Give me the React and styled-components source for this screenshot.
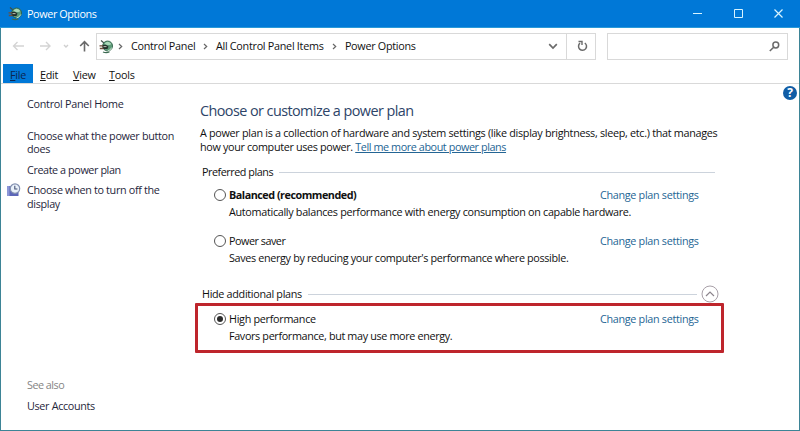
import React, {useState} from 'react'
import styled, {createGlobalStyle} from 'styled-components'

const colors = {
    accent: '#0078d7',
    frame: '#3d8496',
    text: '#101010',
    nav: '#1f263b',
    heading: '#2d4468',
    link: '#246594',
    line: '#d9d9d9',
    icon: '#6b6b6b',
    highlight: '#be252c',
}

const GlobalStyle = createGlobalStyle`
* {
    box-sizing: border-box;
}
body {
    margin: 0;
    background: #fff;
    font-family: "Open Sans", "Noto Sans", sans-serif;
    font-size: 10.8px;
    line-height: 14px;
    letter-spacing: -0.33px;
    color: ${colors.text};
    overflow: hidden;
}
`

const Window = styled.div`
display: flex;
flex-direction: column;
width: 800px;
height: 431px;
background: #fff;
border: solid ${colors.frame};
border-width: 0 1px 1px 1px;
`
const TitleBar = styled.header`
display: flex;
align-items: center;
flex: 0 0 28px;
margin: 0 -1px;
padding: 0 1px 0 8px;
background: ${colors.accent};
border-bottom: 1px solid #2a9ad8;
`
const Title = styled.span`
flex: 1;
margin-left: 5px;
color: #fff;
letter-spacing: -0.38px;
`
const WindowButton = styled.button`
display: flex;
align-items: center;
justify-content: center;
width: 40.5px;
height: 27px;
padding: 0;
border: none;
background: transparent;
color: #d8f4ff;
`
const NavBar = styled.div`
display: flex;
align-items: center;
flex: 0 0 36px;
padding: 0 11px 0 10px;
`
const NavIcons = styled.div`
display: flex;
align-items: center;
width: 85px;
svg {
    display: block;
}
`
const AddressBar = styled.div`
display: flex;
align-items: center;
width: 501px;
height: 27px;
border: 1px solid ${colors.line};
`
const Crumb = styled.span`
flex: 0 0 ${({$width}) => $width}px;
letter-spacing: -0.28px;
white-space: nowrap;
`
const AddressIcon = styled.span`
display: flex;
justify-content: center;
width: 19px;
`
const Separator = styled.span`
display: flex;
justify-content: center;
flex: 0 0 10px;
margin-right: 5px;
`
const AddressButton = styled.button`
display: flex;
align-items: center;
justify-content: center;
width: ${({$width}) => $width}px;
height: 25px;
padding: 0 0 0 ${({$shift}) => $shift || 0}px;
border: none;
border-left: 1px solid ${({$line}) => $line ? colors.line : 'transparent'};
background: transparent;
`
const SearchBox = styled.div`
display: flex;
align-items: center;
justify-content: flex-end;
width: 181px;
height: 27px;
margin-left: 11px;
padding-right: 7px;
border: 1px solid ${colors.line};
`
const MenuBar = styled.nav`
display: flex;
flex: 0 0 20px;
padding-left: 2px;
border-bottom: 1px solid ${colors.line};
`
const MenuItem = styled.span`
width: ${({$width}) => $width}px;
padding: 4px 0 0 7px;
background: ${({$active}) => $active ? colors.accent : 'transparent'};
color: ${({$active}) => $active ? '#0b2550' : colors.text};
letter-spacing: -0.25px;
`
const Body = styled.div`
display: flex;
flex: 1;
`
const Sidebar = styled.aside`
display: flex;
flex-direction: column;
width: 190px;
padding: 13px 0 18px 26px;
`
const SideLink = styled.a`
position: relative;
margin-bottom: ${({$gap}) => $gap || 0}px;
color: ${({$muted}) => $muted ? '#858585' : colors.nav};
line-height: 13.5px;
letter-spacing: ${({$track}) => $track || -0.33}px;
white-space: nowrap;
`
const Spacer = styled.div`
flex: 1;
`
const TimerBadge = styled.span`
position: absolute;
left: -21px;
top: 0;
`
const Main = styled.main`
flex: 1;
padding: 17px 0 0 9px;
`
const Heading = styled.h1`
margin: 0 0 5px;
font-size: 14.4px;
font-weight: 400;
line-height: 20px;
color: ${colors.heading};
letter-spacing: -0.56px;
`
const Intro = styled.div`
margin-bottom: 10px;
`
const Line = styled.div`
line-height: 13.5px;
letter-spacing: ${({$track}) => $track || -0.3}px;
white-space: nowrap;
`
const HelpLink = styled.a`
color: ${colors.link};
text-decoration: underline;
text-underline-offset: 1px;
letter-spacing: -0.41px;
`
const GroupTitle = styled.div`
display: flex;
align-items: center;
width: 519px;
height: 18px;
padding-left: 2px;
letter-spacing: ${({$track}) => $track || -0.31}px;
white-space: nowrap;
`
const Rule = styled.span`
flex: 1;
height: 1px;
margin: 0 ${({$end}) => $end}px 0 6px;
background: #ccd3dc;
`
const PlanRow = styled.div`
width: 520px;
height: ${({$height}) => $height}px;
padding: ${({$top}) => $top}px 21px 0 14px;
`
const PlanHead = styled.label`
display: flex;
align-items: center;
height: 15px;
`
const Radio = styled.span`
display: flex;
align-items: center;
justify-content: center;
width: 12px;
height: 12px;
margin-right: 3px;
border: 1px solid #555;
border-radius: 50%;
&::after {
    content: '';
    width: 6px;
    height: 6px;
    border-radius: 50%;
    background: ${({$checked}) => $checked ? '#2b2b2b' : 'transparent'};
}
`
const PlanName = styled.span`
flex: 1;
font-weight: ${({$bold}) => $bold ? 700 : 400};
letter-spacing: ${({$track}) => $track || 0}px;
`
const PlanLink = styled.a`
width: 99px;
color: ${colors.link};
letter-spacing: -0.31px;
white-space: nowrap;
`
const PlanNote = styled.div`
margin: 3px 0 0 15px;
letter-spacing: ${({$track}) => $track || 0}px;
white-space: nowrap;
`
const Highlight = styled.div`
width: 529px;
height: 50px;
margin-left: -5px;
padding-left: 2px;
border: 3px solid ${colors.highlight};
border-radius: 1px;
`
const Help = styled.span`
display: flex;
align-items: center;
justify-content: center;
flex: 0 0 14px;
height: 14px;
margin: 2px 2px 0 0;
border-radius: 50%;
background: #105ca5;
color: #fff;
font-size: 12px;
font-weight: 700;
letter-spacing: 0;
`

const PlugIcon = () => (
    <svg width="14" height="15" viewBox="0 0 14 15" fill="none">
        <path d="M2 1.5 L5 4" stroke="#3d4f47" strokeWidth="1.1"/>
        <circle cx="8.6" cy="7" r="5" fill="#5d9a78" stroke="#2c5c44" strokeWidth="0.8"/>
        <path d="M5.5 4.5 Q8.5 1 12 4.5 Q12 6.5 9.5 6 Q7 6.5 5.5 4.5Z" fill="#a9d8b8"/>
        <path d="M8.5 12 Q11.5 11.5 12.8 8.5" stroke="#c4e6cc" strokeWidth="1"/>
        <path d="M4 13 Q7.5 14.5 10.5 12.8" stroke="#3c6a52" strokeWidth="1.2"/>
        <path d="M3.5 6 L7 5.8 L9.5 7.5 L8.5 10 L4 10Z" fill="#23312b"/>
        <path d="M0.5 6.8 H4 M0.8 9.5 H4.5" stroke="#6e4f3d" strokeWidth="1.3"/>
        <path d="M4.5 7.6 H7.5" stroke="#c9cdbd" strokeWidth="0.9"/>
    </svg>
)

const TimerIcon = () => (
    <svg width="15" height="15" viewBox="0 0 15 15" fill="none">
        <path d="M1 3 H7 V9 H12.5 V13 H1Z" fill="#5c66b8"/>
        <path d="M1 3 H3.5 V13 H1Z" fill="#8d97d8"/>
        <circle cx="9" cy="5.6" r="4.7" fill="#e9f1fa" stroke="#8390b0" strokeWidth="1.2"/>
        <path d="M8.8 2.8 V6 H11.4" stroke="#465274" strokeWidth="1.1"/>
    </svg>
)

const Arrow = ({d, width, color, stroke = 1.4}) => (
    <svg width={width} height="14" viewBox={`0 0 ${width} 14`} fill="none">
        <path d={d} stroke={color} strokeWidth={stroke}/>
    </svg>
)

const Chevron = () => (
    <svg width="5" height="7" viewBox="0 0 5 7" fill="none">
        <path d="M1 1 L3.7 3.5 L1 6" stroke="#666" strokeWidth="1.2"/>
    </svg>
)

const preferred = [
    {id: 'balanced', name: 'Balanced (recommended)', bold: true, height: 46, top: 6,
        nameTrack: -0.48, noteTrack: -0.31,
        note: 'Automatically balances performance with energy consumption on capable hardware.'},
    {id: 'saver', name: 'Power saver', height: 58, top: 6,
        nameTrack: -0.48, noteTrack: -0.34,
        note: "Saves energy by reducing your computer's performance where possible."},
]
const extra = {id: 'high', name: 'High performance', height: 44, top: 5,
    nameTrack: -0.29, noteTrack: -0.35,
    note: 'Favors performance, but may use more energy.'}

const Plan = ({plan, checked, onSelect}) => (
    <PlanRow $height={plan.height} $top={plan.top}>
        <PlanHead onClick={() => onSelect(plan.id)}>
            <Radio $checked={checked}/>
            <PlanName $bold={plan.bold} $track={plan.nameTrack}>{plan.name}</PlanName>
            <PlanLink>Change plan settings</PlanLink>
        </PlanHead>
        <PlanNote $track={plan.noteTrack}>{plan.note}</PlanNote>
    </PlanRow>
)

const App = () => {
    const [selected, setSelected] = useState('high')

    return (
        <Window>
            <GlobalStyle/>
            <TitleBar>
                <PlugIcon/>
                <Title>Power Options</Title>
                <WindowButton>
                    <svg width="9" height="9"><path d="M0 4.5 H9" stroke="currentColor"/></svg>
                </WindowButton>
                <WindowButton>
                    <svg width="9" height="9"><path d="M0.5 0.5 H8.5 V8.5 H0.5Z" stroke="currentColor" fill="none"/></svg>
                </WindowButton>
                <WindowButton>
                    <svg width="9" height="9"><path d="M0.5 0.5 L8.5 8.5 M8.5 0.5 L0.5 8.5" stroke="currentColor" strokeWidth="1.2"/></svg>
                </WindowButton>
            </TitleBar>
            <NavBar>
                <NavIcons>
                    <Arrow width={27} color="#d4d4d4" d="M13 7 H2.5 M6.5 3 L2.5 7 L6.5 11"/>
                    <Arrow width={24} color="#d4d4d4" d="M2 7 H12 M8 3 L12 7 L8 11"/>
                    <Arrow width={16} color="#cfcfcf" d="M2 6 L4 8 L6 6"/>
                    <Arrow width={14} color="#696969" stroke={1.6} d="M6.5 12.5 V3 M2.2 7 L6.5 2.7 L10.8 7"/>
                </NavIcons>
                <AddressBar>
                    <AddressIcon><PlugIcon/></AddressIcon>
                    <Separator><Chevron/></Separator>
                    <Crumb $width={70}>Control Panel</Crumb>
                    <Separator><Chevron/></Separator>
                    <Crumb $width={114}>All Control Panel Items</Crumb>
                    <Separator><Chevron/></Separator>
                    <Crumb $width={80}>Power Options</Crumb>
                    <Spacer/>
                    <AddressButton $width={29} $shift={2}>
                        <svg width="10" height="7" fill="none"><path d="M1.2 1.2 L5 5 L8.8 1.2" stroke={colors.icon} strokeWidth="1.7"/></svg>
                    </AddressButton>
                    <AddressButton $width={29} $shift={2} $line>
                        <svg width="11" height="12" viewBox="0 0 11 12" fill="none">
                            <path d="M3 3.2 A4 4 0 1 0 7.8 3" stroke={colors.icon} strokeWidth="1.5"/>
                            <path d="M1.5 1.5 H5 V5" stroke={colors.icon} strokeWidth="1.4"/>
                        </svg>
                    </AddressButton>
                </AddressBar>
                <SearchBox>
                    <svg width="11" height="11" viewBox="0 0 11 11" fill="none">
                        <circle cx="6.8" cy="4" r="2.9" stroke={colors.icon} strokeWidth="1.5"/>
                        <path d="M4.7 6.2 L0.8 10" stroke={colors.icon} strokeWidth="1.6"/>
                    </svg>
                </SearchBox>
            </NavBar>
            <MenuBar>
                <MenuItem $width={30} $active><u>F</u>ile</MenuItem>
                <MenuItem $width={33}><u>E</u>dit</MenuItem>
                <MenuItem $width={36}><u>V</u>iew</MenuItem>
                <MenuItem $width={40}><u>T</u>ools</MenuItem>
            </MenuBar>
            <Body>
                <Sidebar>
                    <SideLink $gap={18} $track={-0.27}>Control Panel Home</SideLink>
                    <SideLink $gap={7}>Choose what the power button<br/>does</SideLink>
                    <SideLink $gap={7} $track={-0.41}>Create a power plan</SideLink>
                    <SideLink>
                        <TimerBadge><TimerIcon/></TimerBadge>
                        Choose when to turn off the<br/>display
                    </SideLink>
                    <Spacer/>
                    <SideLink $muted $gap={7} $track={-0.5}>See also</SideLink>
                    <SideLink>User Accounts</SideLink>
                </Sidebar>
                <Main>
                    <Heading>Choose or customize a power plan</Heading>
                    <Intro>
                        <Line>A power plan is a collection of hardware and system settings (like display brightness, sleep, etc.) that manages</Line>
                        <Line $track={-0.34}>how your computer uses power. <HelpLink>Tell me more about power plans</HelpLink></Line>
                    </Intro>
                    <GroupTitle $track={-0.46}>Preferred plans<Rule $end={4}/></GroupTitle>
                    {preferred.map((plan) =>
                        <Plan key={plan.id} plan={plan} checked={selected === plan.id} onSelect={setSelected}/>
                    )}
                    <GroupTitle>
                        Hide additional plans<Rule $end={4}/>
                        <svg width="18" height="18" fill="none">
                            <circle cx="9" cy="9" r="8" stroke="#a8a0a8"/>
                            <path d="M5 11 L9 7 L13 11" stroke="#8d858d" strokeWidth="1.2"/>
                        </svg>
                    </GroupTitle>
                    <Highlight>
                        <Plan plan={extra} checked={selected === extra.id} onSelect={setSelected}/>
                    </Highlight>
                </Main>
                <Help>?</Help>
            </Body>
        </Window>
    )
}

export default App
